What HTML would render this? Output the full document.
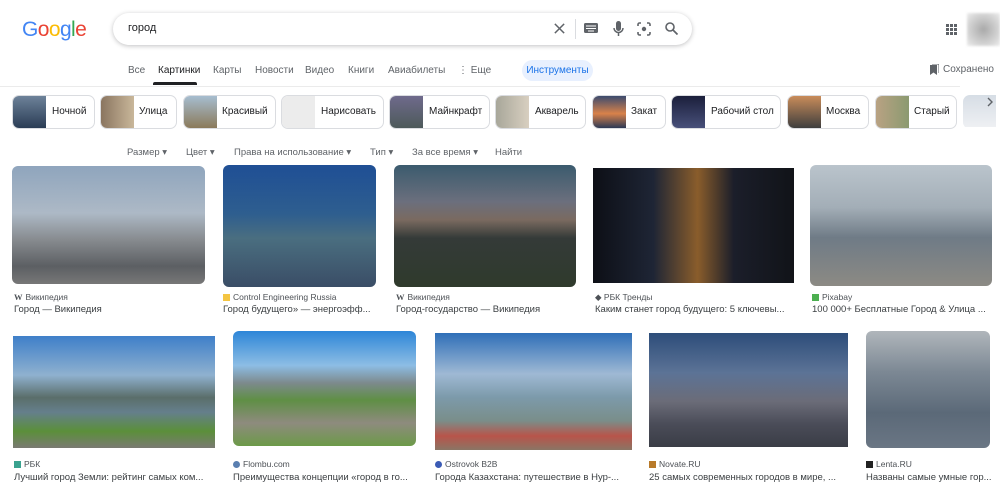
<!DOCTYPE html>
<html><head><meta charset="utf-8"><style>
*{box-sizing:border-box;margin:0;padding:0}
body{width:1000px;height:492px;overflow:hidden;background:#fff;font-family:"Liberation Sans",Arial,sans-serif;color:#202124;position:relative}
.a{position:absolute}
.logo{left:22px;top:18px;font-size:21px;letter-spacing:-0.6px;font-weight:400}
.sb{left:113px;top:13px;width:579px;height:32px;border-radius:16px;box-shadow:0 1px 5px rgba(32,33,36,.28);background:#fff}
.tab{top:65px;font-size:10px;color:#5f6368}
.chip{top:95px;height:34px;border:1px solid #dadce0;border-radius:7px;overflow:hidden;background:#fff;font-size:10px;color:#202124}
.chip .t{position:absolute;left:0;top:0;width:33px;height:32px}
.chip span{position:absolute;top:10px}
.flt{top:147px;font-size:9.5px;color:#5f6368}
.img{border-radius:6px;overflow:hidden}
.src{font-size:8.5px;color:#4d5156}
.ttl{font-size:9.5px;color:#3c4043;white-space:nowrap}
.ic{display:inline-block;width:7px;height:7px;margin-right:3px;vertical-align:-1px}
</style></head><body>
<div class="a logo"><span style="color:#4285f4">G</span><span style="color:#ea4335">o</span><span style="color:#fbbc05">o</span><span style="color:#4285f4">g</span><span style="color:#34a853">l</span><span style="color:#ea4335">e</span></div>
<div class="a sb">
 <div class="a" style="left:15px;top:9px;font-size:11px">город</div>
 <svg class="a" style="left:440px;top:9px" width="13" height="13" viewBox="0 0 14 14"><path d="M2 2L12 12M12 2L2 12" stroke="#5f6368" stroke-width="1.6"/></svg>
 <div class="a" style="left:462px;top:6px;width:1px;height:20px;background:#dadce0"></div>
 <svg class="a" style="left:471px;top:10px" width="14" height="11" viewBox="0 0 14 11"><rect x="0" y="0" width="14" height="10" rx="1.5" fill="#5f6368"/><path d="M2 3h10M2 5.5h10M4 8h6" stroke="#fff" stroke-width="1"/></svg>
 <svg class="a" style="left:500px;top:8px" width="11" height="16" viewBox="0 0 11 16"><rect x="3" y="0" width="5" height="10" rx="2.5" fill="#5f6368"/><path d="M1 7a4.5 4.5 0 0 0 9 0M5.5 11.5V15" stroke="#5f6368" stroke-width="1.5" fill="none"/></svg>
 <svg class="a" style="left:524px;top:9px" width="14" height="14" viewBox="0 0 14 14"><path d="M1 4V2.5A1.5 1.5 0 0 1 2.5 1H4M10 1h1.5A1.5 1.5 0 0 1 13 2.5V4M1 10v1.5A1.5 1.5 0 0 0 2.5 13H4M13 10v1.5a1.5 1.5 0 0 1-1.5 1.5H10" stroke="#5f6368" stroke-width="1.6" fill="none"/><circle cx="7" cy="7" r="2.2" fill="#5f6368"/></svg>
 <svg class="a" style="left:552px;top:9px" width="13" height="13" viewBox="0 0 13 13"><circle cx="5" cy="5" r="4" stroke="#5f6368" stroke-width="1.6" fill="none"/><path d="M8 8l4.5 4.5" stroke="#5f6368" stroke-width="1.7"/></svg>
</div>
<svg class="a" style="left:946px;top:24px" width="11" height="11" viewBox="0 0 11 11" fill="#5f6368"><rect x="0" y="0" width="3" height="3"/><rect x="4" y="0" width="3" height="3"/><rect x="8" y="0" width="3" height="3"/><rect x="0" y="4" width="3" height="3"/><rect x="4" y="4" width="3" height="3"/><rect x="8" y="4" width="3" height="3"/><rect x="0" y="8" width="3" height="3"/><rect x="4" y="8" width="3" height="3"/><rect x="8" y="8" width="3" height="3"/></svg>
<div class="a" style="left:967px;top:13px;width:33px;height:33px;background:radial-gradient(circle,#a9a9a9,#d8d8d8 70%,#eee);filter:blur(1px)"></div>

<div class="a tab" style="left:128px">Все</div>
<div class="a tab" style="left:158px;color:#202124">Картинки</div>
<div class="a" style="left:153px;top:82px;width:44px;height:3px;background:#202124;border-radius:2px 2px 0 0"></div>
<div class="a tab" style="left:213px">Карты</div>
<div class="a tab" style="left:255px">Новости</div>
<div class="a tab" style="left:305px">Видео</div>
<div class="a tab" style="left:348px">Книги</div>
<div class="a tab" style="left:388px">Авиабилеты</div>
<div class="a tab" style="left:458px">⋮ Еще</div>
<div class="a" style="left:522px;top:60px;width:71px;height:21px;border-radius:11px;background:#e8f0fe;color:#1a73e8;font-size:10px;text-align:center;line-height:21px">Инструменты</div>
<svg class="a" style="left:930px;top:64px" width="9" height="11" viewBox="0 0 9 11"><path d="M0 1h7v10L3.5 8.5 0 11z" fill="#5f6368"/><path d="M2 0h7v9" stroke="#5f6368" fill="none"/></svg>
<div class="a tab" style="left:943px;top:64px">Сохранено</div>
<div class="a" style="left:0;top:86px;width:960px;height:1px;background:#ebebeb"></div>

<div class="a chip" style="left:12px;width:83px"><div class="t" style="background:linear-gradient(#6d8299,#2a3c55)"></div><span style="left:39px">Ночной</span></div>
<div class="a chip" style="left:100px;width:77px"><div class="t" style="background:linear-gradient(90deg,#8a7560,#c9b79a)"></div><span style="left:38px">Улица</span></div>
<div class="a chip" style="left:183px;width:93px"><div class="t" style="background:linear-gradient(#a6bdd0,#8b7a5a)"></div><span style="left:38px">Красивый</span></div>
<div class="a chip" style="left:281px;width:103px"><div class="t" style="background:#ececec"></div><span style="left:39px">Нарисовать</span></div>
<div class="a chip" style="left:389px;width:101px"><div class="t" style="background:linear-gradient(#6f6a8c,#4d5a5a)"></div><span style="left:39px">Майнкрафт</span></div>
<div class="a chip" style="left:495px;width:91px"><div class="t" style="background:linear-gradient(90deg,#a8a79a,#d8cfc0)"></div><span style="left:39px">Акварель</span></div>
<div class="a chip" style="left:592px;width:74px"><div class="t" style="background:linear-gradient(#3b4b6e,#d9824a 55%,#2c3955)"></div><span style="left:38px">Закат</span></div>
<div class="a chip" style="left:671px;width:110px"><div class="t" style="background:linear-gradient(#1b1f3b,#48507a)"></div><span style="left:39px">Рабочий стол</span></div>
<div class="a chip" style="left:787px;width:82px"><div class="t" style="background:linear-gradient(#c98c5a,#3e3e3e)"></div><span style="left:38px">Москва</span></div>
<div class="a chip" style="left:875px;width:82px"><div class="t" style="background:linear-gradient(90deg,#b9a283,#8b9a70)"></div><span style="left:38px">Старый</span></div>
<div class="a chip" style="left:963px;width:40px;border:none"><div class="t" style="background:linear-gradient(#d6dde5,#eef0f3)"></div></div>
<svg class="a" style="left:987px;top:97px" width="7" height="10" viewBox="0 0 7 10"><path d="M1 1l4 4-4 4" stroke="#5f6368" stroke-width="1.4" fill="none"/></svg>

<div class="a flt" style="left:127px">Размер ▾</div>
<div class="a flt" style="left:186px">Цвет ▾</div>
<div class="a flt" style="left:234px">Права на использование ▾</div>
<div class="a flt" style="left:370px">Тип ▾</div>
<div class="a flt" style="left:412px">За все время ▾</div>
<div class="a flt" style="left:495px">Найти</div>

<div class="a img" style="left:12px;top:166px;width:193px;height:118px;background:linear-gradient(#8fa5bd 0%,#adb9c6 40%,#888c90 62%,#5c5f63 85%,#777 100%)"></div>
<div class="a img" style="left:223px;top:165px;width:153px;height:122px;background:linear-gradient(#1f4f95,#2e5e8f 40%,#4a6e80 60%,#3a4d66 100%)"></div>
<div class="a img" style="left:394px;top:165px;width:182px;height:122px;background:linear-gradient(#3b5b6e,#6b6f7d 30%,#7a6a60 45%,#343a38 60%,#2f3a2c 100%)"></div>
<div class="a" style="left:593px;top:168px;width:201px;height:115px;background:linear-gradient(90deg,#0d0f16 0%,#1e2535 30%,#8a5d2b 52%,#1b1e2a 70%,#111318 100%)"></div>
<div class="a img" style="left:810px;top:165px;width:182px;height:121px;background:linear-gradient(#bac4cc,#a3aeb7 35%,#6f7b86 60%,#8c8a84 100%)"></div>

<div class="a src" style="left:14px;top:292px"><b style="font-family:'Liberation Serif';margin-right:3px">W</b>Википедия</div>
<div class="a ttl" style="left:14px;top:304px">Город — Википедия</div>
<div class="a src" style="left:223px;top:292px"><span class="ic" style="background:#f4c542"></span>Control Engineering Russia</div>
<div class="a ttl" style="left:223px;top:304px">Город будущего» — энергоэфф...</div>
<div class="a src" style="left:396px;top:292px"><b style="font-family:'Liberation Serif';margin-right:3px">W</b>Википедия</div>
<div class="a ttl" style="left:396px;top:304px">Город-государство — Википедия</div>
<div class="a src" style="left:595px;top:292px">◆ РБК Тренды</div>
<div class="a ttl" style="left:595px;top:304px">Каким станет город будущего: 5 ключевы...</div>
<div class="a src" style="left:812px;top:292px"><span class="ic" style="background:#4caf50"></span>Pixabay</div>
<div class="a ttl" style="left:812px;top:304px">100 000+ Бесплатные Город &amp; Улица ...</div>

<div class="a" style="left:13px;top:336px;width:202px;height:112px;background:linear-gradient(#3f7fc9 0%,#8fb1cf 35%,#5a6e6a 55%,#657f8c 68%,#5b8f3a 85%,#7a7a72 100%)"></div>
<div class="a img" style="left:233px;top:331px;width:183px;height:115px;background:linear-gradient(#2d86d8 0%,#8dbde4 30%,#7d8a8e 45%,#5f8f45 60%,#8e8b7e 80%,#6c9a48 100%)"></div>
<div class="a" style="left:435px;top:333px;width:197px;height:117px;background:linear-gradient(#2f6fb8 0%,#9fb9d4 35%,#7c9aaa 55%,#7a8e8a 75%,#b8544a 88%,#8a7565 100%)"></div>
<div class="a" style="left:649px;top:333px;width:199px;height:114px;background:linear-gradient(#2d4d7a 0%,#5c7396 35%,#6b6c78 60%,#4a4c58 80%,#3a3d46 100%)"></div>
<div class="a img" style="left:866px;top:331px;width:124px;height:117px;background:linear-gradient(#b0b6bb,#7c8894 35%,#5b6978 70%,#6a7684 100%)"></div>

<div class="a src" style="left:14px;top:459px"><span class="ic" style="background:#3aa28f"></span>РБК</div>
<div class="a ttl" style="left:14px;top:472px">Лучший город Земли: рейтинг самых ком...</div>
<div class="a src" style="left:233px;top:459px"><span class="ic" style="background:#5a7fb0;border-radius:50%"></span>Flombu.com</div>
<div class="a ttl" style="left:233px;top:472px">Преимущества концепции «город в го...</div>
<div class="a src" style="left:435px;top:459px"><span class="ic" style="background:#3b5bb5;border-radius:50%"></span>Ostrovok B2B</div>
<div class="a ttl" style="left:435px;top:472px">Города Казахстана: путешествие в Нур-...</div>
<div class="a src" style="left:649px;top:459px"><span class="ic" style="background:#b87a2a"></span>Novate.RU</div>
<div class="a ttl" style="left:649px;top:472px">25 самых современных городов в мире, ...</div>
<div class="a src" style="left:866px;top:459px"><span class="ic" style="background:#222"></span>Lenta.RU</div>
<div class="a ttl" style="left:866px;top:472px">Названы самые умные гор...</div>
</body></html>
